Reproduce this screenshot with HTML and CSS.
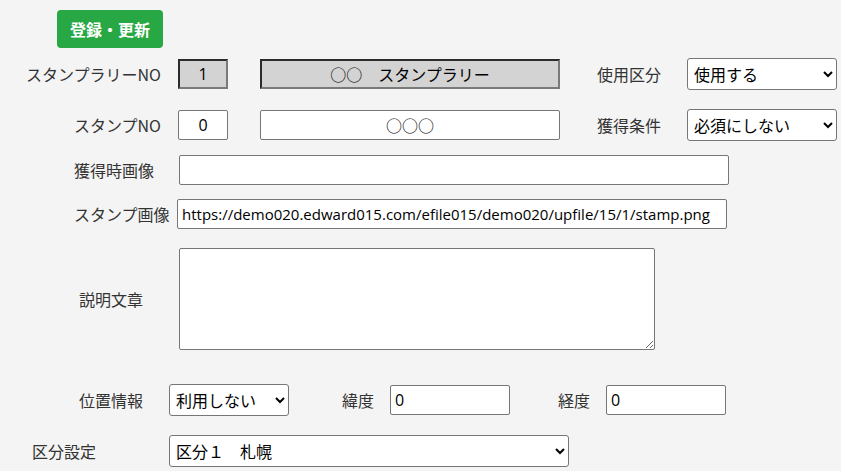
FILE: index.html
```html
<!DOCTYPE html>
<html lang="ja">
<head>
    <meta charset="UTF-8">
    <meta name="viewport" content="width=device-width, initial-scale=1.0">
    <title>スタンプ登録</title>
    <link rel="stylesheet" href="styles.css">
</head>
<body>

<div class="page">
    <button class="btn-save">登録・更新</button>

    <div class="row row-1">
        <label class="cell-right">スタンプラリーNO</label>
        <input type="text" class="in-no readonly" value="1" readonly>
        <input type="text" class="in-name readonly" value="○○　スタンプラリー" readonly>
        <label class="cell-side">使用区分</label>
        <select class="sel-side">
            <option>使用する</option>
            <option>使用しない</option>
        </select>
    </div>

    <div class="row row-2">
        <label class="cell-right">スタンプNO</label>
        <input type="text" class="in-no" value="0">
        <input type="text" class="in-name" value="○○○">
        <label class="cell-side">獲得条件</label>
        <select class="sel-side">
            <option>必須にしない</option>
            <option>必須にする</option>
        </select>
    </div>

    <div class="row row-3">
        <label class="cell-img">獲得時画像</label>
        <input type="text" class="in-url shift" value="">
    </div>

    <div class="row row-4">
        <label class="cell-img">スタンプ画像</label>
        <input type="text" class="in-url" value="https://demo020.edward015.com/efile015/demo020/upfile/15/1/stamp.png">
    </div>

    <div class="row row-5">
        <label class="cell-desc">説明文章</label>
        <textarea class="in-desc"></textarea>
    </div>

    <div class="row row-6">
        <label class="cell-desc">位置情報</label>
        <select class="sel-geo">
            <option>利用しない</option>
            <option>利用する</option>
        </select>
        <label class="cell-geo lat">緯度</label>
        <input type="text" class="in-geo" value="0">
        <label class="cell-geo lng">経度</label>
        <input type="text" class="in-geo" value="0">
    </div>

    <div class="row row-7">
        <label class="cell-area">区分設定</label>
        <select class="sel-area">
            <option>区分１　札幌</option>
            <option>区分２　函館</option>
        </select>
    </div>
</div>

</body>
</html>
```

FILE: styles.css
```css
body {
    margin: 0;
    background-color: #f4f4f4;
    color: #333;
    font-family: "Noto Sans CJK JP", "Open Sans", sans-serif;
    font-size: 16px;
}

.page {
    display: flex;
    flex-direction: column;
    align-items: flex-start;
    padding-top: 10px;
}

.btn-save {
    margin-left: 57px;
    width: 106px;
    height: 38px;
    background-color: #28a745;
    color: #fff;
    border: none;
    border-radius: 4px;
    font-family: "Noto Sans CJK JP", sans-serif;
    font-size: 16px;
    font-weight: bold;
    cursor: pointer;
}

.row {
    display: flex;
    align-items: center;
}

.row-1 { margin-top: 10px; height: 32px; }
.row-2 { margin-top: 19px; height: 32px; }
.row-3 { margin-top: 14px; height: 30px; }
.row-4 { margin-top: 14px; height: 30px; }
.row-5 { margin-top: 19px; height: 102px; }
.row-6 { margin-top: 34px; height: 32px; }
.row-7 { margin-top: 19px; height: 32px; }

label {
    color: #333;
    white-space: nowrap;
}

input, select, textarea {
    box-sizing: border-box;
    font-family: "Open Sans", "Noto Sans CJK JP", sans-serif;
    font-size: 15px;
    color: #000;
    background-color: #fff;
    border: 1px solid #767676;
    border-radius: 2px;
    margin: 0;
}

input {
    height: 30px;
    padding: 0 4px;
}

select {
    height: 32px;
    padding: 0 2px;
    border-radius: 3px;
    font-family: "Noto Sans CJK JP", sans-serif;
    font-size: 16px;
}

.readonly {
    background-color: #d3d3d3;
    border: 2px solid;
    border-color: #2b2b2b #7a7a7a #7a7a7a #2b2b2b;
    border-radius: 0;
}

.cell-right {
    width: 161px;
    text-align: right;
}

.in-no {
    margin-left: 17px;
    width: 50px;
    text-align: center;
    font-size: 16px;
}

.in-name {
    margin-left: 32px;
    width: 300px;
    text-align: center;
    font-family: "Noto Sans CJK JP", sans-serif;
    font-size: 16px;
}

.cell-side {
    margin-left: 37px;
    width: 90px;
}

.sel-side {
    width: 150px;
}

.cell-img {
    margin-left: 74px;
    width: 103px;
}

.in-url {
    width: 550px;
}

.in-url.shift {
    margin-left: 2px;
}

.cell-desc {
    margin-left: 79px;
    width: 90px;
}

.in-desc {
    margin-left: 10px;
    width: 476px;
    height: 102px;
    resize: both;
}

.sel-geo {
    width: 120px;
}

.cell-geo {
    width: 48px;
}

.cell-geo.lat {
    margin-left: 53px;
}

.cell-geo.lng {
    margin-left: 48px;
}

.in-geo {
    width: 120px;
    font-size: 16px;
}

.cell-area {
    margin-left: 32px;
    width: 137px;
}

.sel-area {
    width: 400px;
}
```
